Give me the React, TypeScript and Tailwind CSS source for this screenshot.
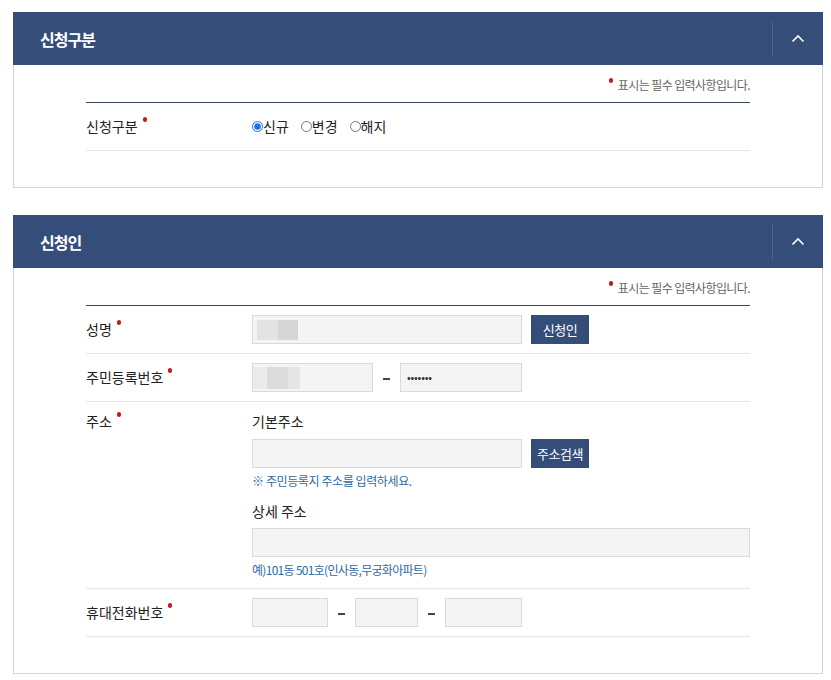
import { ReactNode } from 'react';

const FONT = "font-['Malgun_Gothic','Noto_Sans_CJK_KR','Noto_Sans',sans-serif]";

const Required = () => <span className="relative -top-[10px] ml-[5px] inline-block h-[5px] w-[4px] rounded-full bg-[#c8161d]" />;

const Section = ({ title, children }: { title: string; children: ReactNode }) => (
  <section>
    <div className="flex h-[53px] items-center justify-between bg-[#344d79]">
      <h3 className="pl-[27px] text-[16px] font-bold tracking-[-1px] text-white">{title}</h3>
      <div className="flex h-[36px] w-[51px] items-center justify-center border-l border-[#4d6390]">
        <svg width="14" height="9" viewBox="0 0 14 9" fill="none">
          <path d="M1.5 7.5 L7 2 L12.5 7.5" stroke="white" strokeWidth="1.6" />
        </svg>
      </div>
    </div>
    <div className="border border-t-0 border-[#d5d5d5] px-[72px] pb-[36px] pt-[10px]">
      <p className="flex h-[20px] items-center justify-end text-[12px] tracking-[-0.6px] text-[#666]">
        <span className="relative -top-[5px] mr-[5px] inline-block h-[5px] w-[4px] rounded-full bg-[#c8161d]" />
        표시는 필수 입력사항입니다.
      </p>
      <div className="mt-[7px] border-t border-[#3b4857]">{children}</div>
    </div>
  </section>
);

const Row = ({ label, children, top }: { label: string; children: ReactNode; top?: boolean }) => (
  <div className={`flex border-b border-[#e6e6e6] ${top ? 'items-start pb-[9px] pt-[9px]' : 'h-[48px] items-center'}`}>
    <div className="w-[166px] text-[14px] text-[#222]">
      {label}
      <Required />
    </div>
    <div className="flex-1">{children}</div>
  </div>
);

const Field = ({ className = '', children }: { className?: string; children?: ReactNode }) => (
  <div className={`flex h-[29px] items-center overflow-hidden border border-[#dadada] bg-[#f4f4f4] ${className}`}>{children}</div>
);

const Dash = () => <span className="mx-[10px] inline-block h-[2px] w-[7px] translate-y-[1px] bg-[#444]" />;

const Btn = ({ children }: { children: ReactNode }) => (
  <button className="ml-[9px] h-[29px] w-[58px] bg-[#344d79] text-[13px] tracking-[-0.5px] text-white">{children}</button>
);

const Radio = ({ label, checked }: { label: string; checked?: boolean }) => (
  <label className="mr-[12px] flex items-center text-[14px] text-[#222]">
    <input type="radio" name="kind" defaultChecked={checked} className="m-0 h-[11px] w-[11px] accent-[#1a73e8]" />
    {label}
  </label>
);

const App = () => {
  return (
    <div className={`min-h-[680px] bg-white pl-[13px] pr-[8px] pt-[12px] ${FONT}`}>
      <Section title="신청구분">
        <Row label="신청구분">
          <div className="flex items-center">
            <Radio label="신규" checked />
            <Radio label="변경" />
            <Radio label="해지" />
          </div>
        </Row>
      </Section>

      <div className="h-[27px]" />

      <Section title="신청인">
        <Row label="성명">
          <div className="flex items-center">
            <Field className="w-[270px]">
              <div className="ml-[4px] h-[20px] w-[21px] bg-[#e3e3e3]" />
              <div className="h-[20px] w-[20px] bg-[#d6d6d6]" />
            </Field>
            <Btn>신청인</Btn>
          </div>
        </Row>
        <Row label="주민등록번호">
          <div className="flex items-center">
            <Field className="w-[121px]">
              <div className="h-[22px] w-[14px] bg-[#ebebeb]" />
              <div className="h-[22px] w-[21px] bg-[#dcdcdc]" />
              <div className="h-[22px] w-[12px] bg-[#e5e5e5]" />
            </Field>
            <Dash />
            <Field className="w-[122px] pl-[6px]">
              <span className="text-[11px] tracking-[-0.2px] text-[#333]">•••••••</span>
            </Field>
          </div>
        </Row>
        <Row label="주소" top>
          <div className="flex flex-col">
            <p className="h-[20px] text-[14px] leading-[20px] text-[#222]">기본주소</p>
            <div className="mt-[8px] flex items-center">
              <Field className="w-[270px]" />
              <Btn>주소검색</Btn>
            </div>
            <p className="mt-[4px] h-[18px] text-[12px] leading-[18px] tracking-[-0.4px] text-[#2f6aa3]">※ 주민등록지 주소를 입력하세요.</p>
            <p className="mt-[11px] h-[20px] text-[14px] leading-[20px] text-[#222]">상세 주소</p>
            <Field className="mt-[7px] w-full" />
            <p className="mt-[4px] h-[18px] text-[12px] leading-[18px] tracking-[-0.7px] text-[#2f6aa3]">예)101동 501호(인사동,무궁화아파트)</p>
          </div>
        </Row>
        <Row label="휴대전화번호">
          <div className="flex items-center">
            <Field className="w-[76px]" />
            <Dash />
            <Field className="w-[63px]" />
            <Dash />
            <Field className="w-[77px]" />
          </div>
        </Row>
      </Section>
    </div>
  );
};

export default App;
